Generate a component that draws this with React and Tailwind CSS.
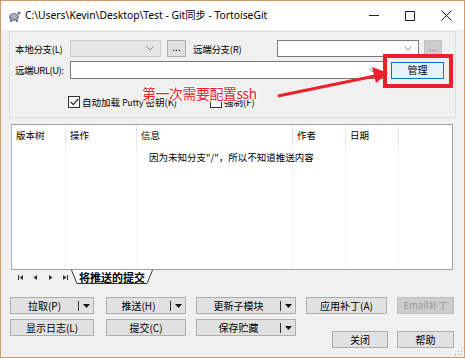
import React from 'react'

function Chevron({ c = '#606060' }) {
  return (
    <svg width="8" height="5" viewBox="0 0 8 5">
      <path d="M0.5 0.5 L4 4 L7.5 0.5" fill="none" stroke={c} strokeWidth="1" />
    </svg>
  )
}

function Btn({ w, children, className = '' }) {
  return (
    <div
      className={`h-[17px] border border-[#adadad] bg-[#e1e1e1] flex items-center justify-center text-[10px] leading-[12px] whitespace-nowrap shrink-0 ${className}`}
      style={{ width: w }}
    >
      {children}
    </div>
  )
}

function SplitBtn({ w, children }) {
  return (
    <div
      className="h-[17px] border border-[#adadad] bg-[#e1e1e1] flex items-center text-[10px] leading-[12px] whitespace-nowrap shrink-0"
      style={{ width: w }}
    >
      <div className="flex-1 text-center">{children}</div>
      <div className="w-px h-[10px] bg-[#333]" />
      <div className="w-[14px] flex justify-center">
        <svg width="7" height="4" viewBox="0 0 7 4">
          <path d="M0 0 L7 0 L3.5 4 Z" fill="#111" />
        </svg>
      </div>
    </div>
  )
}

function NavGlyph({ d }) {
  return (
    <svg width="7" height="7" viewBox="0 0 7 7">
      <path d={d} fill="#333" />
    </svg>
  )
}

export default function App() {
  return (
    <div className="w-[465px] h-[358px] border border-[#cf9a66] bg-[#f0f0f0] flex flex-col relative overflow-hidden text-black whitespace-nowrap font-['Noto_Sans_CJK_SC',sans-serif]">
      {/* title bar */}
      <div className="h-[29px] bg-white flex items-center shrink-0">
        <svg className="ml-[7px]" width="13" height="12" viewBox="0 0 13 12">
          <ellipse cx="6" cy="7" rx="5" ry="4" fill="#7f8a99" />
          <ellipse cx="6" cy="6.5" rx="3" ry="2.5" fill="#aab4c0" />
          <circle cx="11" cy="3" r="1.6" fill="#6a7686" />
          <rect x="2" y="10" width="2" height="2" fill="#6a7686" />
          <rect x="8" y="10" width="2" height="2" fill="#6a7686" />
        </svg>
        <div className="ml-[4px] text-[10.3px] leading-[13px] font-['Noto_Sans','Noto_Sans_CJK_SC',sans-serif]">
          C:\Users\Kevin\Desktop\Test - Git同步 - TortoiseGit
        </div>
        <div className="ml-auto flex h-full">
          <div className="w-[36px] flex items-center justify-center">
            <div className="w-[10px] h-px bg-[#222]" />
          </div>
          <div className="w-[36px] flex items-center justify-center">
            <div className="w-[10px] h-[10px] border border-[#222]" />
          </div>
          <div className="w-[36px] flex items-center justify-center">
            <svg width="11" height="11" viewBox="0 0 11 11">
              <path d="M0.5 0.5 L10.5 10.5 M10.5 0.5 L0.5 10.5" stroke="#222" strokeWidth="1" />
            </svg>
          </div>
        </div>
      </div>

      {/* top group */}
      <div className="mx-[8px] mt-[1px] h-[87px] border border-[#dcdcdc] flex flex-col shrink-0 text-[9.5px] leading-[12px]">
        <div className="mt-[8px] flex items-center h-[17px]">
          <div className="ml-[5px] w-[55px] tracking-[-0.3px]">本地分支(L)</div>
          <div className="w-[91px] h-[17px] border border-[#cccccc] bg-[#e6e6e6] flex items-center justify-end pr-[6px]">
            <Chevron c="#8a8a8a" />
          </div>
          <Btn w={19} className="ml-[6px] pb-[3px]">...</Btn>
          <div className="ml-[7px] w-[84px] tracking-[-0.3px]">远端分支(R)</div>
          <div className="w-[142px] h-[17px] border border-[#7a7a7a] bg-white flex items-center justify-end pr-[6px]">
            <Chevron c="#8a8a8a" />
          </div>
          <div className="ml-[5px] w-[18px] h-[17px] border border-[#bfbfbf] bg-[#cccccc] flex items-center justify-center pb-[3px] text-[#777]">...</div>
        </div>
        <div className="mt-[4px] flex items-center h-[18px]">
          <div className="ml-[5px] w-[55px] tracking-[-0.5px]">远端URL(U):</div>
          <div className="w-[314px] h-[18px] border border-[#7a7a7a] bg-white flex items-center justify-end pr-[6px]">
            <Chevron c="#8a8a8a" />
          </div>
          <div className="ml-[7px] w-[53px] h-[17px] border border-[#0078d7] bg-[#e5f1fb] flex items-center justify-center text-[10px]">管理</div>
        </div>
        <div className="mt-[16px] flex items-center h-[14px]">
          <div className="ml-[58px] w-[12px] h-[12px] border border-[#333] bg-white flex items-center justify-center">
            <svg width="9" height="8" viewBox="0 0 9 8">
              <path d="M0.8 4 L3.3 6.6 L8.2 1" fill="none" stroke="#222" strokeWidth="1.2" />
            </svg>
          </div>
          <div className="ml-[2px] w-[128px]">自动加载 <span className="text-[8.5px]">Putty</span> 密钥(K)</div>
          <div className="w-[12px] h-[12px] border border-[#333] bg-white" />
          <div className="ml-[2px]">强制(F)</div>
        </div>
      </div>

      {/* list */}
      <div className="ml-[10px] mt-[6px] w-[442px] h-[146px] border border-[#a0a0a0] border-l-[#9fb4d0] bg-white flex flex-col shrink-0 text-[9.5px] leading-[12px]">
        <div className="flex h-[20px] items-center">
          <div className="w-[54px] pl-[4px] h-full flex items-center border-r border-[#e5e5e5]">版本树</div>
          <div className="w-[71px] pl-[4px] h-full flex items-center border-r border-[#e5e5e5]">操作</div>
          <div className="w-[156px] pl-[4px] h-full flex items-center border-r border-[#e5e5e5]">信息</div>
          <div className="w-[53px] pl-[4px] h-full flex items-center border-r border-[#e5e5e5]">作者</div>
          <div className="w-[53px] pl-[4px] h-full flex items-center border-r border-[#e5e5e5]">日期</div>
        </div>
        <div className="flex-1 relative flex">
          <div className="w-[54px] border-r border-[#f2f2f2]" />
          <div className="w-[71px] border-r border-[#f2f2f2]" />
          <div className="w-[156px] border-r border-[#f2f2f2]" />
          <div className="w-[53px] border-r border-[#f2f2f2]" />
          <div className="w-[53px] border-r border-[#f2f2f2]" />
          <div className="absolute left-[137px] top-[6px] bg-white">因为未知分支"/"，所以不知道推送内容</div>
        </div>
      </div>

      {/* tab bar */}
      <div className="ml-[12px] h-[14px] flex items-center shrink-0">
        <div className="w-[15px] flex justify-center"><NavGlyph d="M1 1 H2 V6 H1 Z M6 1 V6 L2.5 3.5 Z" /></div>
        <div className="w-[15px] flex justify-center"><NavGlyph d="M5 1 V6 L1.5 3.5 Z" /></div>
        <div className="w-[15px] flex justify-center"><NavGlyph d="M2 1 V6 L5.5 3.5 Z" /></div>
        <div className="w-[15px] flex justify-center"><NavGlyph d="M1 1 V6 L4.5 3.5 Z M5 1 H6 V6 H5 Z" /></div>
        <div className="relative w-[82px] h-[14px] ml-[-2px] flex items-center justify-center">
          <svg className="absolute inset-0" width="82" height="14" viewBox="0 0 82 14">
            <path d="M0.5 0 L6 13.5 L76 13.5 L81.5 0" fill="#fff" stroke="#333" strokeWidth="1" />
          </svg>
          <span className="relative text-[11px] leading-[13px] font-bold">将推送的提交</span>
        </div>
      </div>

      {/* buttons */}
      <div className="ml-[9px] mt-[13px] flex shrink-0">
        <SplitBtn w={84}>拉取(P)</SplitBtn>
        <div className="ml-[12px]"><SplitBtn w={80}>推送(H)</SplitBtn></div>
        <div className="ml-[10px]"><SplitBtn w={100}>更新子模块</SplitBtn></div>
        <Btn w={81} className="ml-[10px]">应用补丁(A)</Btn>
        <div className="ml-[10px] w-[57px] h-[17px] border border-[#bfbfbf] bg-[#cccccc] flex items-center justify-center text-[9.5px] text-[#9a9a9a]">Email补丁</div>
      </div>
      <div className="ml-[9px] mt-[5px] flex items-start shrink-0">
        <Btn w={84}>显示日志(L)</Btn>
        <Btn w={80} className="ml-[12px]">提交(C)</Btn>
        <div className="ml-[10px]"><SplitBtn w={100}>保存贮藏</SplitBtn></div>
        <Btn w={56} className="mt-[12px] ml-[36px] border-[#0078d7]">关闭</Btn>
        <Btn w={57} className="mt-[12px] ml-[9px]">帮助</Btn>
      </div>

      {/* resize grip */}
      <svg className="absolute right-[1px] bottom-[1px]" width="8" height="8" viewBox="0 0 8 8">
        <rect x="6" y="0" width="1" height="1" fill="#aaa" />
        <rect x="3" y="3" width="1" height="1" fill="#aaa" />
        <rect x="6" y="3" width="1" height="1" fill="#aaa" />
        <rect x="0" y="6" width="1" height="1" fill="#aaa" />
        <rect x="3" y="6" width="1" height="1" fill="#aaa" />
        <rect x="6" y="6" width="1" height="1" fill="#aaa" />
      </svg>

      {/* annotation */}
      <div className="absolute left-[382px] top-[53px] w-[70px] h-[34px] border-[4px] border-[#e8212b]" />
      <svg className="absolute left-0 top-0" width="465" height="358" viewBox="0 0 465 358">
        <path d="M277 95 L374 75" stroke="#e8212b" strokeWidth="3" fill="none" />
        <path d="M387 72 L371 66 L375 82 Z" fill="#e8212b" />
      </svg>
      <div
        className="absolute left-[141px] top-[83px] text-[14px] leading-[18px] tracking-[-0.5px] text-[#e8212b]"
        style={{ textShadow: '1px 0 #fff, -1px 0 #fff, 0 1px #fff, 0 -1px #fff, 1px 1px #fff, -1px -1px #fff, 1px -1px #fff, -1px 1px #fff' }}
      >
        第一次需要配置ssh
      </div>
    </div>
  )
}
